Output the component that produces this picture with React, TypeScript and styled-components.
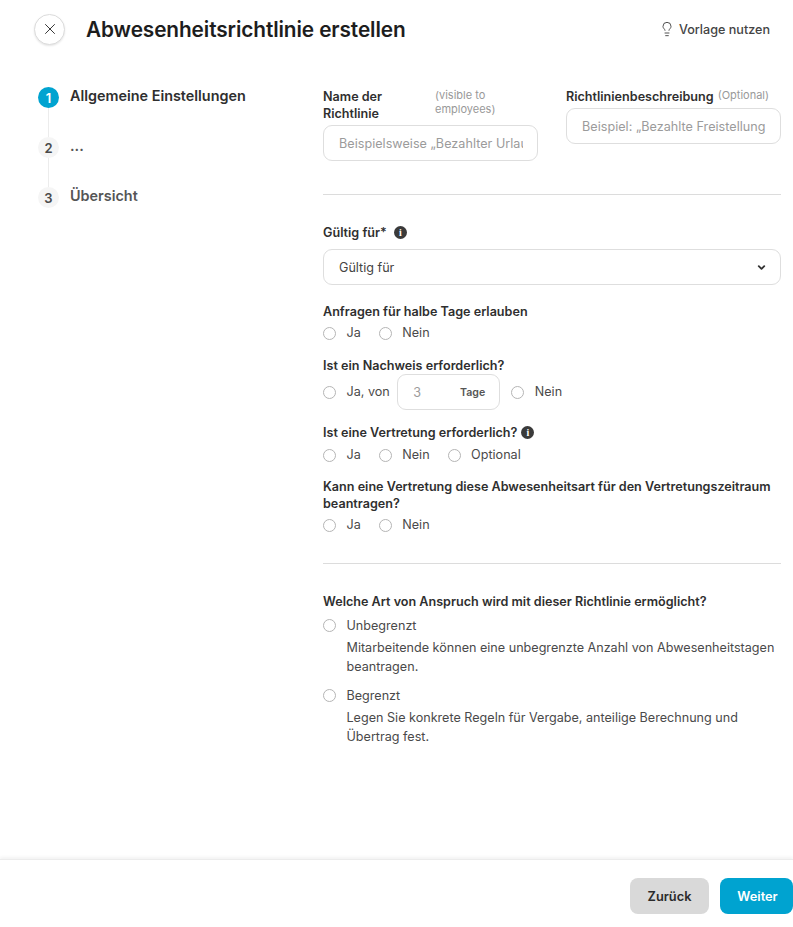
import React from "react";
import styled, { createGlobalStyle } from "styled-components";
import { X, Lightbulb, ChevronDown } from "lucide-react";

const Global = createGlobalStyle`
  html, body { margin: 0; padding: 0; background: #fff; }
  body { font-family: Inter, "Noto Sans", sans-serif; color: #2b2b2b; }
  * { box-sizing: border-box; }
`;
const Page = styled.div`
  width: 793px; height: 927px; display: flex; flex-direction: column; overflow: hidden;
`;
const Header = styled.header`
  height: 58px; padding: 0 23px 0 34px; display: flex; align-items: center; flex: none;
`;
const CloseButton = styled.button`
  width: 31px; height: 31px; border-radius: 50%; border: 1px solid #dcdcdc; background: #fff; padding: 0;
  display: flex; align-items: center; justify-content: center; color: #333; box-shadow: 0 1px 2px rgba(0,0,0,.1);
`;
const Title = styled.h1`
  margin: 0 0 0 21px; font-size: 20.8px; font-weight: 600; color: #1d1d1d; letter-spacing: -0.1px; flex: 1;
`;
const TemplateLink = styled.div`
  display: flex; align-items: center; gap: 4px; font-size: 12.6px; font-weight: 500; color: #444;
`;
const Body = styled.main`
  flex: 1; display: flex; padding: 30px 12px 0 38px; min-height: 0;
`;
const Stepper = styled.ol`
  list-style: none; margin: -1px 0 0; padding: 0; width: 285px; flex: none;
`;
const Step = styled.li<{ $last?: boolean }>`
  position: relative; display: flex; gap: 11px; height: 50px;
  &::after {
    content: ""; display: ${p => (p.$last ? "none" : "block")};
    position: absolute; left: 10px; top: 21px; width: 1px; height: 29px; background: #ececec;
  }
`;
const StepNumber = styled.span<{ $active?: boolean }>`
  width: 21px; height: 21px; border-radius: 50%; flex: none; display: flex; align-items: center; justify-content: center;
  font-size: 13px; font-weight: 600; background: ${p => (p.$active ? "#00a3d0" : "#f5f5f5")}; color: ${p => (p.$active ? "#fff" : "#4a4a4a")};
`;
const StepLabel = styled.span<{ $active?: boolean }>`
  font-size: 14.4px; font-weight: 600; line-height: 18px; color: ${p => (p.$active ? "#2f2f2f" : "#555")};
`;
const Form = styled.form`
  width: 458px; flex: none; margin: 0;
`;
const NameRow = styled.div`
  display: grid; grid-template-columns: 215px 215px; gap: 28px; height: 106px; align-items: start;
`;
const Field = styled.div`
  display: flex; flex-direction: column;
`;
const LabelRow = styled.div<{ $height: number }>`
  display: flex; height: ${p => p.$height}px; gap: 4px;
`;
const Label = styled.label`
  display: block; font-size: 12.6px; font-weight: 600; line-height: 17px; color: #2f2f2f;
`;
const NameLabel = styled(Label)`
  width: 108px; flex: none;
`;
const Hint = styled.span`
  font-size: 11px; line-height: 14px; color: #999;
`;
const InputBox = styled.input`
  height: 36px; width: 100%; border: 1px solid #dedede; border-radius: 9px; padding: 0 14px 0 15px; font: 12.6px Inter, sans-serif; background: #fff; letter-spacing: .03px;
  &::placeholder { color: #9b9b9b; opacity: 1; }
`;
const Divider = styled.hr<{ $after: number }>`
  margin: 0 0 ${p => p.$after}px; border: 0; border-top: 1px solid #dcdcdc;
`;
const SelectBox = styled.div`
  height: 36px; border: 1px solid #dedede; border-radius: 9px; padding: 0 13px 0 15px; display: flex; align-items: center; justify-content: space-between;
  font-size: 12.6px; color: #444; margin-top: 8px; margin-bottom: 18px;
`;
const InlineLabel = styled(Label)`
  display: flex; align-items: center; gap: 4px; min-height: 18px;
`;
const InfoDot = styled.span<{ $gap?: number }>`
  width: 13px; height: 13px; border-radius: 50%; background: #3a3a3a; color: #fff; display: inline-flex; align-items: center; justify-content: center;
  font-size: 10px; font-weight: 800; font-family: "Liberation Serif", serif; margin-left: ${p => p.$gap ?? 0}px;
`;
const RadioRow = styled.div<{ $bottom: number; $top: number }>`
  display: flex; align-items: center; gap: 18px; height: 20px; margin-top: ${p => p.$top}px; margin-bottom: ${p => p.$bottom}px;
`;
const RadioItem = styled.span`
  display: flex; align-items: center; gap: 10.5px; font-size: 12.6px; color: #4a4a4a; line-height: 20px;
`;
const RadioCircle = styled.span`
  width: 13px; height: 13px; border-radius: 50%; border: 1px solid #b5b5b5; background: #fff; flex: none;
`;
const ProofRow = styled.div`
  display: flex; align-items: center; height: 36px; margin-bottom: 13px;
`;
const DaysBox = styled.div`
  width: 103px; height: 36px; border: 1px solid #dedede; border-radius: 9px; margin: 0 11px 0 7.5px; padding: 0 14px 0 15px; display: flex; align-items: center; justify-content: space-between;
  font-size: 12.6px; color: #9b9b9b;
`;
const DaysUnit = styled.span`
  font-size: 10.6px; font-weight: 600; color: #555;
`;
const Entitlement = styled.div<{ $top: number; $bottom: number }>`
  display: grid; grid-template-columns: 13px 1fr; column-gap: 10.5px; align-items: center; margin: ${p => p.$top}px 0 ${p => p.$bottom}px; font-size: 12.6px; color: #4a4a4a; line-height: 19px;
`;
const EntitlementText = styled.p`
  grid-column: 2; margin: 4px 0 0; color: #4a4a4a; font-size: 12.6px; line-height: 18.5px;
`;
const Footer = styled.footer`
  height: 68px; flex: none; border-top: 1px solid #ececec; box-shadow: 0 -2px 3px rgba(0,0,0,.05); display: flex; justify-content: flex-end; align-items: flex-start; gap: 11px; padding-top: 18px; background: #fff;
`;
const Button = styled.button<{ $primary?: boolean }>`
  height: 36px; width: ${p => (p.$primary ? "73px" : "79px")}; border: 0; border-radius: 8px; font: 600 12.8px Inter, sans-serif;
  padding: 0 0 0 ${p => (p.$primary ? "2px" : "0")};
  background: ${p => (p.$primary ? "#00a3d0" : "#d9d9d9")}; color: ${p => (p.$primary ? "#fff" : "#2b2b2b")};
`;

const Radio = ({ children }: { children: React.ReactNode }) => (
  <RadioItem><RadioCircle />{children}</RadioItem>
);

export default function App() {
  return (
    <Page>
      <Global />
      <Header>
        <CloseButton type="button" aria-label="Schließen"><X size={18} strokeWidth={1.3} /></CloseButton>
        <Title>Abwesenheitsrichtlinie erstellen</Title>
        <TemplateLink><Lightbulb size={16} strokeWidth={1.4} />Vorlage nutzen</TemplateLink>
      </Header>
      <Body>
        <Stepper>
          <Step><StepNumber $active>1</StepNumber><StepLabel $active>Allgemeine Einstellungen</StepLabel></Step>
          <Step><StepNumber>2</StepNumber><StepLabel>...</StepLabel></Step>
          <Step $last><StepNumber>3</StepNumber><StepLabel>Übersicht</StepLabel></Step>
        </Stepper>
        <Form>
          <NameRow>
            <Field>
              <LabelRow $height={37}>
                <NameLabel>Name der Richtlinie</NameLabel>
                <Hint>(visible to employees)</Hint>
              </LabelRow>
              <InputBox placeholder="Beispielsweise „Bezahlter Urlaub“" />
            </Field>
            <Field>
              <LabelRow $height={20}>
                <Label>Richtlinienbeschreibung</Label>
                <Hint>(Optional)</Hint>
              </LabelRow>
              <InputBox placeholder="Beispiel: „Bezahlte Freistellung“" />
            </Field>
          </NameRow>
          <Divider $after={28} />
          <InlineLabel>Gültig für*<InfoDot $gap={3}>i</InfoDot></InlineLabel>
          <SelectBox>Gültig für<ChevronDown size={11} strokeWidth={4} color="#333" /></SelectBox>
          <Label>Anfragen für halbe Tage erlauben</Label>
          <RadioRow $top={3} $bottom={14}><Radio>Ja</Radio><Radio>Nein</Radio></RadioRow>
          <Label>Ist ein Nachweis erforderlich?</Label>
          <ProofRow>
            <Radio>Ja, von</Radio>
            <DaysBox>3<DaysUnit>Tage</DaysUnit></DaysBox>
            <Radio>Nein</Radio>
          </ProofRow>
          <InlineLabel>Ist eine Vertretung erforderlich?<InfoDot>i</InfoDot></InlineLabel>
          <RadioRow $top={4} $bottom={13}><Radio>Ja</Radio><Radio>Nein</Radio><Radio>Optional</Radio></RadioRow>
          <Label>Kann eine Vertretung diese Abwesenheitsart für den Vertretungszeitraum beantragen?</Label>
          <RadioRow $top={3} $bottom={28}><Radio>Ja</Radio><Radio>Nein</Radio></RadioRow>
          <Divider $after={29} />
          <Label>Welche Art von Anspruch wird mit dieser Richtlinie ermöglicht?</Label>
          <Entitlement $top={6} $bottom={10}>
            <RadioCircle /><span>Unbegrenzt</span>
            <EntitlementText>Mitarbeitende können eine unbegrenzte Anzahl von Abwesenheitstagen beantragen.</EntitlementText>
          </Entitlement>
          <Entitlement $top={0} $bottom={0}>
            <RadioCircle /><span>Begrenzt</span>
            <EntitlementText>Legen Sie konkrete Regeln für Vergabe, anteilige Berechnung und Übertrag fest.</EntitlementText>
          </Entitlement>
        </Form>
      </Body>
      <Footer>
        <Button type="button">Zurück</Button>
        <Button type="button" $primary>Weiter</Button>
      </Footer>
    </Page>
  );
}
